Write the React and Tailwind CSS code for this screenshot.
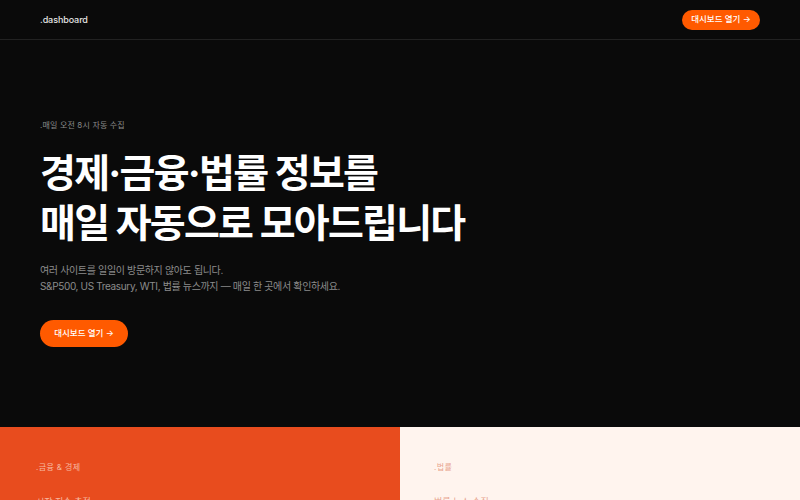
import React from "react";

const font = {
  fontFamily: 'Inter, "Noto Sans CJK KR", sans-serif',
};

function OpenButton({ big }) {
  return (
    <a
      href="#"
      className={
        big
          ? "inline-flex items-center justify-center h-[27px] w-[88px] rounded-full bg-[#ff5a00] text-[8.5px] font-medium text-white"
          : "inline-flex items-center justify-center h-[20px] w-[78px] rounded-full bg-[#ff5a00] text-[8.5px] font-medium text-white"
      }
    >
      대시보드 열기 →
    </a>
  );
}

export default function App() {
  return (
    <div className="min-h-screen bg-[#0a0a0a] text-white" style={font}>
      {/* Nav */}
      <header className="flex h-[40px] items-center justify-between border-b border-[#222] px-[40px]">
        <span className="text-[9px] font-medium tracking-[-0.01em] text-[#e5e5e5]">.dashboard</span>
        <OpenButton />
      </header>

      {/* Hero */}
      <section className="px-[40px] pt-[79px] pb-[80px]">
        <p className="text-[8px] tracking-[0.02em] text-[#8a8a8a]">.매일 오전 8시 자동 수집</p>
        <h1 className="mt-[17px] text-[39px] font-bold leading-[50px] tracking-[-0.045em] text-white">
          경제·금융·법률 정보를
          <br />
          매일 자동으로 모아드립니다
        </h1>
        <p className="mt-[14px] text-[10px] leading-[16px] tracking-[-0.035em] text-[#8c8c8c]">
          여러 사이트를 일일이 방문하지 않아도 됩니다.
          <br />
          S&amp;P500, US Treasury, WTI, 법률 뉴스까지 — 매일 한 곳에서 확인하세요.
        </p>
        <div className="mt-[24px]">
          <OpenButton big />
        </div>
      </section>

      {/* Categories */}
      <section className="grid grid-cols-2">
        <div className="bg-[#e84c1e] px-[36px] pt-[34px] pb-[60px]">
          <p className="text-[8px] tracking-[0.05em] text-[#f7b8a0]">.금융 &amp; 경제</p>
          <p className="mt-[22px] text-[9px] text-[#f7b8a0]">시장 지수 추적</p>
        </div>
        <div className="bg-[#fff4ee] px-[34px] pt-[34px] pb-[60px]">
          <p className="text-[8px] tracking-[0.05em] text-[#e8a58e]">.법률</p>
          <p className="mt-[22px] text-[9px] text-[#e8a58e]">법률 뉴스 수집</p>
        </div>
      </section>
    </div>
  );
}
